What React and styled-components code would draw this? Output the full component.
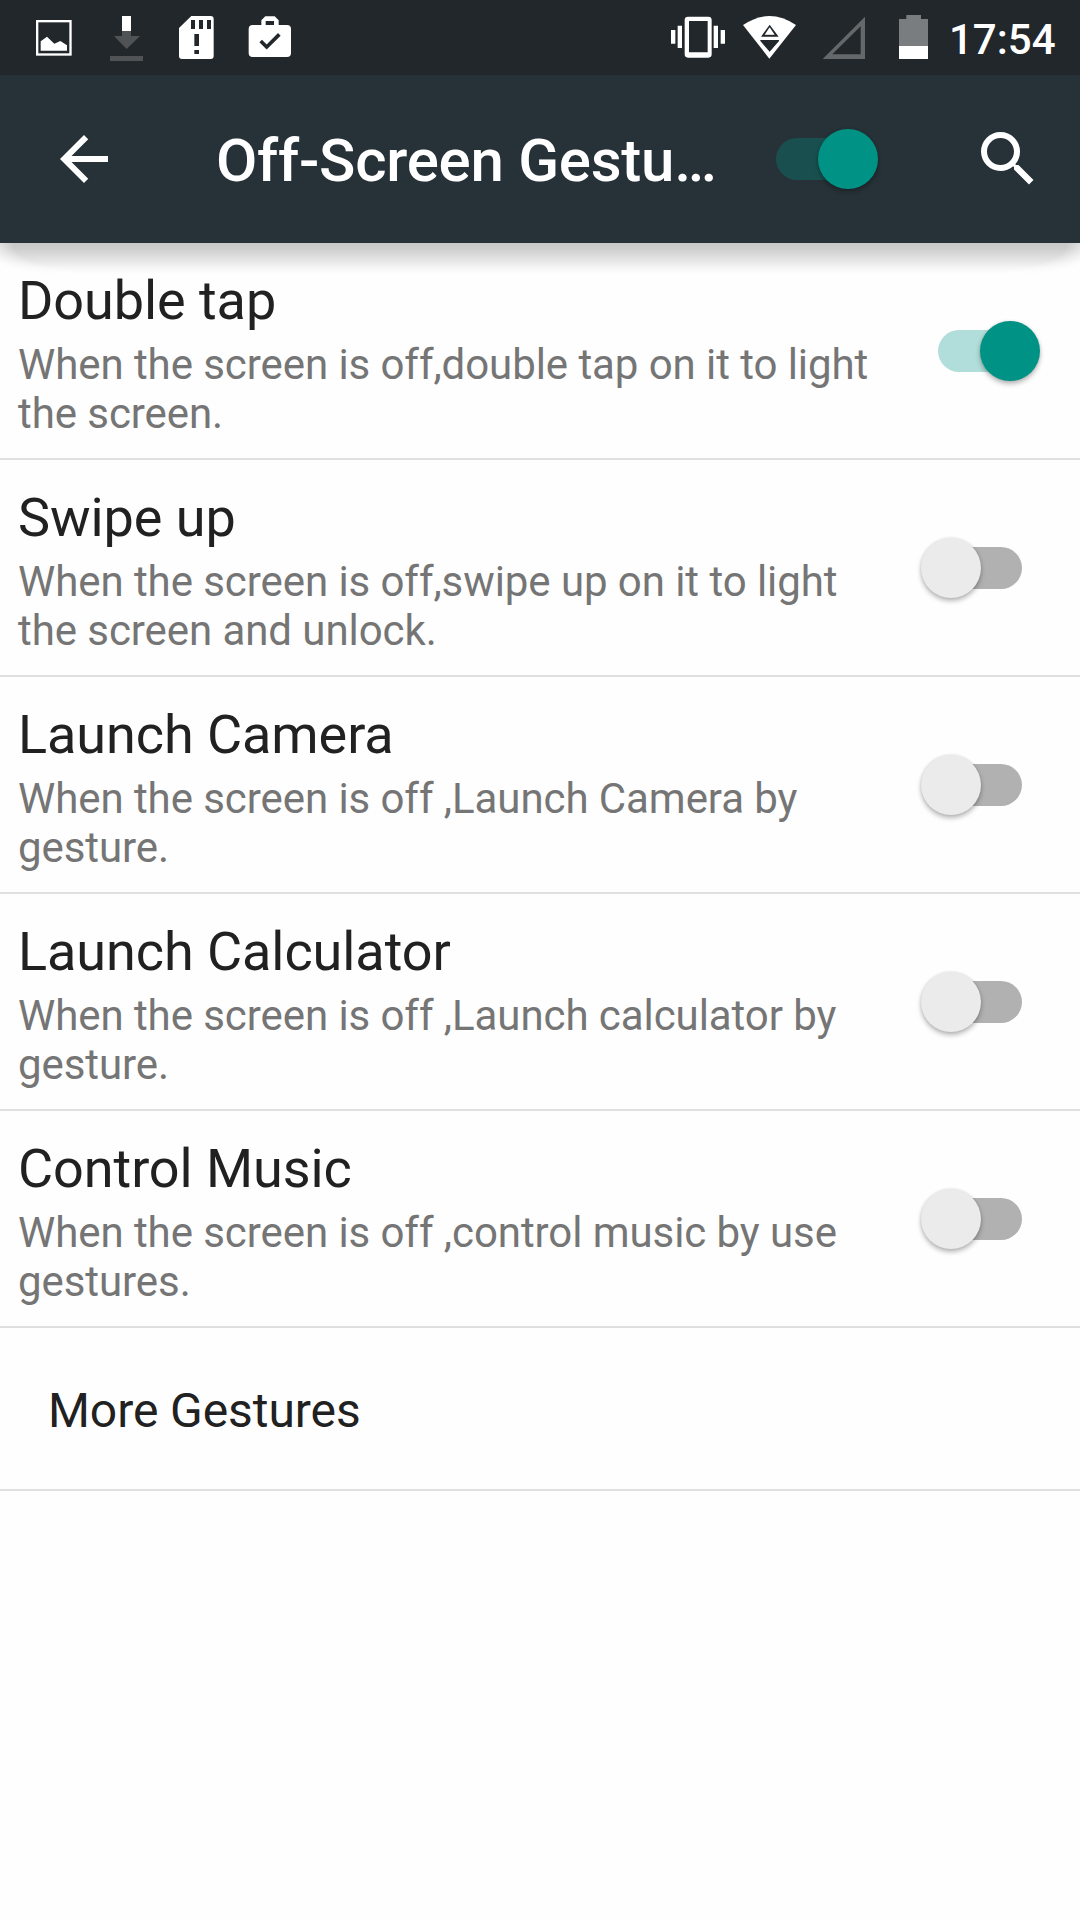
import React, { useState } from "react";
import styled, { createGlobalStyle } from "styled-components";

const GlobalStyle = createGlobalStyle`
  *, *::before, *::after { box-sizing: border-box; }
  body {
    margin: 0;
    background: #fefefe;
    font-family: Roboto, "Noto Sans", sans-serif;
  }
`;

const Screen = styled.div`
  width: 1080px;
  min-height: 1920px;
  display: flex;
  flex-direction: column;
  background: #fefefe;
`;

const StatusBar = styled.div`
  height: 75px;
  display: flex;
  justify-content: space-between;
  padding: 0 24px 0 18px;
  background: #22272b;
  color: #fff;
`;

const StatusGroup = styled.div`
  display: flex;
`;

const StatusIcon = styled.svg`
  display: block;
  width: 72px;
  height: 75px;
`;

const Clock = styled.time`
  width: 106px;
  font-size: 42px;
  font-weight: 500;
  line-height: 80px;
  text-indent: -1px;
  white-space: nowrap;
`;

const AppBar = styled.header`
  position: relative;
  height: 168px;
  display: flex;
  align-items: center;
  padding: 0 36px 0 48px;
  background: #263238;
  color: #fff;

  &::after {
    content: "";
    position: absolute;
    top: 100%;
    left: 0;
    right: 0;
    height: 32px;
    background: linear-gradient(
      #c8c8c8 0,
      #cdcdcd 5px,
      #e4e4e4 17px,
      #f6f6f6 25px,
      #fefefe 31px
    );
    mask-image: radial-gradient(ellipse 96px 34px at 90px 0, #000 80%, transparent 112%),
      radial-gradient(ellipse 96px 34px at 990px 0, #000 80%, transparent 112%),
      linear-gradient(90deg, transparent 60px, #000 100px, #000 980px, transparent 1020px);
  }
`;

const IconButton = styled.button`
  width: 72px;
  height: 72px;
  padding: 0;
  border: 0;
  background: none;
  color: inherit;

  svg {
    display: block;
    width: 72px;
    height: 72px;
    fill: currentColor;
  }
`;

const Title = styled.h1`
  flex: 1;
  margin: 0 0 0 96px;
  padding-top: 3px;
  font-size: 60px;
  font-weight: 500;
  line-height: 70px;
  letter-spacing: -0.25px;
  white-space: nowrap;
`;

const Track = styled.button`
  position: relative;
  flex: none;
  width: 84px;
  height: 42px;
  margin: ${(p) => (p.$inBar ? "0 112px 0 0" : "87px 0 0")};
  padding: 0;
  border: 0;
  border-radius: 21px;
  background: ${(p) => (p.$on ? "rgba(0, 150, 136, 0.3)" : "#b1b1b1")};
`;

const Thumb = styled.span`
  position: absolute;
  top: -9.5px;
  left: ${(p) => (p.$on ? "41.5px" : "-17.5px")};
  width: 60px;
  height: 60px;
  border-radius: 50%;
  background: ${(p) => (p.$on ? "#009385" : "#ebebeb")};
  box-shadow: 0 3px 5px rgba(0, 0, 0, 0.28), 0 0 3px rgba(0, 0, 0, 0.1);
`;

const Row = styled.li`
  display: flex;
  justify-content: space-between;
  height: ${(p) => (p.$compact ? "163px" : "217px")};
  padding: ${(p) => (p.$compact ? "0 48px" : "0 58px 0 18px")};
  border-bottom: 2px solid #dfdfdf;
`;

const List = styled.ul`
  margin: 0;
  padding: 0;
  list-style: none;
`;

const RowText = styled.div`
  width: 870px;
  padding-top: 26px;
`;

const RowTitle = styled.div`
  font-size: 54px;
  line-height: 64px;
  letter-spacing: -0.07px;
  color: #212121;
`;

const Summary = styled.div`
  padding-top: 7px;
  font-size: 42px;
  line-height: 49px;
  letter-spacing: -0.07px;
  color: #757575;
`;

const MoreLabel = styled.div`
  padding-top: 55px;
  font-size: 48px;
  line-height: 56px;
  letter-spacing: -0.07px;
  color: #212121;
`;

function Switch({ initial, inBar }) {
  const [on, setOn] = useState(initial);
  return (
    <Track
      role="switch"
      aria-checked={on}
      $on={on}
      $inBar={inBar}
      onClick={() => setOn(!on)}
    >
      <Thumb $on={on} />
    </Track>
  );
}

const PictureIcon = () => (
  <StatusIcon viewBox="54 0 216 225">
    <rect x="111.5" y="63.5" width="100" height="100" fill="none" stroke="#fff" strokeWidth="7" />
    <path d="M122 152V124L141 110 163 131 181 123 201 136V152Z" fill="#fff" />
  </StatusIcon>
);

const DownloadIcon = () => (
  <StatusIcon viewBox="270 0 216 225">
    <path d="M366 93H393V108H420L380 147 342 108H366ZM330 168H429V183H330Z" fill="#4f5356" />
    <path d="M366 48H393V93H366Z" fill="#fff" />
  </StatusIcon>
);

const SdCardIcon = () => (
  <StatusIcon viewBox="486 0 216 225">
    <path
      fillRule="evenodd"
      fill="#fff"
      d="M574 48H632Q641 48 641 57V168Q641 177 632 177H546Q537 177 537 168V84ZM573 60V87H585V60ZM597 60V87H609V60ZM621 60V87H633V60ZM583 102V138H597V102ZM583 150V162H597V150Z"
    />
  </StatusIcon>
);

const BagIcon = () => (
  <StatusIcon viewBox="702 0 216 225">
    <path
      fillRule="evenodd"
      fill="#fff"
      d="M784 75V61L796 49H824L836 61V75H861Q873 75 873 87V159Q873 171 861 171H758Q746 171 746 159V87Q746 75 758 75ZM797 63V75H822V63Z"
    />
    <path d="M782 123 800 141 838 103" fill="none" stroke="#22272b" strokeWidth="11" />
  </StatusIcon>
);

const VibrateIcon = () => (
  <StatusIcon viewBox="66 0 216 225">
    <path
      fillRule="evenodd"
      fill="#fff"
      d="M144 50H205Q215 50 215 60V163Q215 173 205 173H144Q134 173 134 163V60Q134 50 144 50ZM147 63V157H203V63ZM93 90H106V131H93ZM113 77H126V144H113ZM221 77H234V144H221ZM242 90H255V131H242Z"
    />
  </StatusIcon>
);

const WifiIcon = () => (
  <StatusIcon viewBox="282 0 216 225">
    <path d="M309 75Q388 21 468 75L388 176Z" fill="#fff" />
    <path
      fillRule="evenodd"
      fill="#22272b"
      d="M389 74 363 110H416ZM389 82 404 104H374ZM361 120H417V123L389 155 361 123Z"
    />
    <path d="M389 88 401 103H377Z" fill="#fff" />
  </StatusIcon>
);

const SignalIcon = () => (
  <StatusIcon viewBox="498 0 216 225">
    <path fillRule="evenodd" fill="#64686b" d="M548 177 675 50V177ZM577 163H662V79Z" />
  </StatusIcon>
);

const BatteryIcon = () => (
  <StatusIcon viewBox="714 0 216 225">
    <path d="M777 57H799V45H843V57H864V138H777Z" fill="#7a7d80" />
    <path d="M777 138H864V177H777Z" fill="#fff" />
  </StatusIcon>
);

const gestures = [
  { title: "Double tap", lines: ["When the screen is off,double tap on it to light", "the screen."], on: true },
  { title: "Swipe up", lines: ["When the screen is off,swipe up on it to light", "the screen and unlock."] },
  { title: "Launch Camera", lines: ["When the screen is off ,Launch Camera by", "gesture."] },
  { title: "Launch Calculator", lines: ["When the screen is off ,Launch calculator by", "gesture."] },
  { title: "Control Music", lines: ["When the screen is off ,control music by use", "gestures."] },
];

export default function App() {
  return (
    <Screen>
      <GlobalStyle />
      <StatusBar>
        <StatusGroup>
          <PictureIcon />
          <DownloadIcon />
          <SdCardIcon />
          <BagIcon />
        </StatusGroup>
        <StatusGroup>
          <VibrateIcon />
          <WifiIcon />
          <SignalIcon />
          <BatteryIcon />
          <Clock>17:54</Clock>
        </StatusGroup>
      </StatusBar>
      <AppBar>
        <IconButton>
          <svg viewBox="0 0 24 24">
            <path d="M20 11H7.83l5.59-5.59L12 4l-8 8 8 8 1.41-1.41L7.83 13H20v-2z" />
          </svg>
        </IconButton>
        <Title>Off-Screen Gestu…</Title>
        <Switch initial={true} inBar />
        <IconButton>
          <svg viewBox="0 0 24 24">
            <path d="M15.5 14h-.79l-.28-.27A6.471 6.471 0 0 0 16 9.5 6.5 6.5 0 1 0 9.5 16c1.61 0 3.09-.59 4.23-1.57l.27.28v.79l5 4.99L20.49 19l-4.99-5zm-6 0C7.01 14 5 11.99 5 9.5S7.01 5 9.5 5 14 7.01 14 9.5 11.99 14 9.5 14z" />
          </svg>
        </IconButton>
      </AppBar>
      <List>
        {gestures.map((g) => (
          <Row key={g.title}>
            <RowText>
              <RowTitle>{g.title}</RowTitle>
              <Summary>
                {g.lines[0]}
                <br />
                {g.lines[1]}
              </Summary>
            </RowText>
            <Switch initial={!!g.on} />
          </Row>
        ))}
        <Row $compact>
          <MoreLabel>More Gestures</MoreLabel>
        </Row>
      </List>
    </Screen>
  );
}
